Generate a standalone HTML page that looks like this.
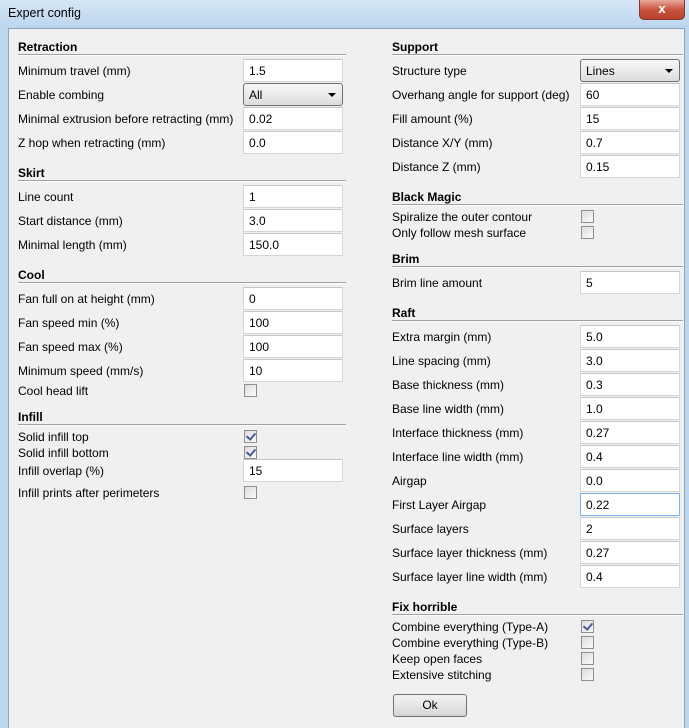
<!DOCTYPE html>
<html><head><meta charset="utf-8"><style>
*{margin:0;padding:0;box-sizing:border-box}
body{width:689px;height:728px;overflow:hidden;background:#bcd6ee;font-family:"Liberation Sans",Tahoma,sans-serif;font-size:12px;color:#000;position:relative}
.tb{position:absolute;left:0;top:0;width:689px;height:28px;background:linear-gradient(#d6e6f6,#bcd5ee)}
.tt{position:absolute;left:8px;top:6px;font-size:12.5px}
.cl{position:absolute;left:639px;top:0;width:46px;height:20px;border:1px solid #7a3a33;border-top:none;border-radius:0 0 5px 5px;background:linear-gradient(#e8a99c,#c8553f 50%,#b8402a);color:#fff;font-weight:bold;text-align:center;font-size:13px;line-height:18px}
.pn{position:absolute;left:8px;top:28px;width:677px;height:700px;background:#f0f0f0;border:1px solid #8ea4bd;border-bottom:none}
.a{position:absolute;white-space:nowrap;margin-top:1px}
.h{font-weight:bold}
.ln{position:absolute;background:#a0a0a0;border-bottom:1px solid #fff;height:2px}
.in{position:absolute;width:100px;height:23px;background:#fff;border:1px solid #d5d5d5;border-top-color:#c5c5c5;padding:4px 0 0 5px}
.cb{position:absolute;width:13px;height:13px;border:1px solid #8f8f8f;background:linear-gradient(135deg,#dcdcdc,#fbfbfb)}
.cb.c::after{content:"";position:absolute;left:3px;top:0px;width:4px;height:7px;border:solid #4a5a9a;border-width:0 2px 2px 0;transform:rotate(40deg)}
.dd{position:absolute;width:100px;height:23px;border:1px solid #707070;border-radius:3px;background:linear-gradient(#f6f6f6,#ebebeb 50%,#dcdcdc);padding:4px 0 0 5px}
.dd::after{content:"";position:absolute;right:6px;top:9px;border:4px solid transparent;border-top:4px solid #000;border-bottom:none}
.ok{position:absolute;left:393px;top:694px;width:74px;height:23px;border:1px solid #707070;border-radius:3px;background:linear-gradient(#f2f2f2,#e6e6e6 50%,#d4d4d4);text-align:center;line-height:21px}
</style></head><body>
<div class="tb"><div class="tt">Expert config</div><div class="cl">x</div></div>
<div class="pn"></div>

<div class="a h" style="left:18px;top:39px">Retraction</div><div class="ln" style="left:18px;top:54px;width:328px"></div>
<div class="a" style="left:18px;top:63px">Minimum travel (mm)</div><div class="in" style="left:243px;top:59px">1.5</div>
<div class="a" style="left:18px;top:87px">Enable combing</div><div class="dd" style="left:243px;top:83px">All</div>
<div class="a" style="left:18px;top:111px">Minimal extrusion before retracting (mm)</div><div class="in" style="left:243px;top:107px">0.02</div>
<div class="a" style="left:18px;top:135px">Z hop when retracting (mm)</div><div class="in" style="left:243px;top:131px">0.0</div>

<div class="a h" style="left:18px;top:165px">Skirt</div><div class="ln" style="left:18px;top:180px;width:328px"></div>
<div class="a" style="left:18px;top:189px">Line count</div><div class="in" style="left:243px;top:185px">1</div>
<div class="a" style="left:18px;top:213px">Start distance (mm)</div><div class="in" style="left:243px;top:209px">3.0</div>
<div class="a" style="left:18px;top:237px">Minimal length (mm)</div><div class="in" style="left:243px;top:233px">150.0</div>

<div class="a h" style="left:18px;top:267px">Cool</div><div class="ln" style="left:18px;top:282px;width:328px"></div>
<div class="a" style="left:18px;top:291px">Fan full on at height (mm)</div><div class="in" style="left:243px;top:287px">0</div>
<div class="a" style="left:18px;top:315px">Fan speed min (%)</div><div class="in" style="left:243px;top:311px">100</div>
<div class="a" style="left:18px;top:339px">Fan speed max (%)</div><div class="in" style="left:243px;top:335px">100</div>
<div class="a" style="left:18px;top:363px">Minimum speed (mm/s)</div><div class="in" style="left:243px;top:359px">10</div>
<div class="a" style="left:18px;top:383px">Cool head lift</div><div class="cb" style="left:244px;top:384px"></div>

<div class="a h" style="left:18px;top:409px">Infill</div><div class="ln" style="left:18px;top:424px;width:328px"></div>
<div class="a" style="left:18px;top:429px">Solid infill top</div><div class="cb c" style="left:244px;top:430px"></div>
<div class="a" style="left:18px;top:445px">Solid infill bottom</div><div class="cb c" style="left:244px;top:446px"></div>
<div class="a" style="left:18px;top:463px">Infill overlap (%)</div><div class="in" style="left:243px;top:459px">15</div>
<div class="a" style="left:18px;top:485px">Infill prints after perimeters</div><div class="cb" style="left:244px;top:486px"></div>

<div class="a h" style="left:392px;top:39px">Support</div><div class="ln" style="left:392px;top:54px;width:291px"></div>
<div class="a" style="left:392px;top:63px">Structure type</div><div class="dd" style="left:580px;top:59px">Lines</div>
<div class="a" style="left:392px;top:87px">Overhang angle for support (deg)</div><div class="in" style="left:580px;top:83px">60</div>
<div class="a" style="left:392px;top:111px">Fill amount (%)</div><div class="in" style="left:580px;top:107px">15</div>
<div class="a" style="left:392px;top:135px">Distance X/Y (mm)</div><div class="in" style="left:580px;top:131px">0.7</div>
<div class="a" style="left:392px;top:159px">Distance Z (mm)</div><div class="in" style="left:580px;top:155px">0.15</div>

<div class="a h" style="left:392px;top:189px">Black Magic</div><div class="ln" style="left:392px;top:204px;width:291px"></div>
<div class="a" style="left:392px;top:209px">Spiralize the outer contour</div><div class="cb" style="left:581px;top:210px"></div>
<div class="a" style="left:392px;top:225px">Only follow mesh surface</div><div class="cb" style="left:581px;top:226px"></div>

<div class="a h" style="left:392px;top:251px">Brim</div><div class="ln" style="left:392px;top:266px;width:291px"></div>
<div class="a" style="left:392px;top:275px">Brim line amount</div><div class="in" style="left:580px;top:271px">5</div>

<div class="a h" style="left:392px;top:305px">Raft</div><div class="ln" style="left:392px;top:320px;width:291px"></div>
<div class="a" style="left:392px;top:329px">Extra margin (mm)</div><div class="in" style="left:580px;top:325px">5.0</div>
<div class="a" style="left:392px;top:353px">Line spacing (mm)</div><div class="in" style="left:580px;top:349px">3.0</div>
<div class="a" style="left:392px;top:377px">Base thickness (mm)</div><div class="in" style="left:580px;top:373px">0.3</div>
<div class="a" style="left:392px;top:401px">Base line width (mm)</div><div class="in" style="left:580px;top:397px">1.0</div>
<div class="a" style="left:392px;top:425px">Interface thickness (mm)</div><div class="in" style="left:580px;top:421px">0.27</div>
<div class="a" style="left:392px;top:449px">Interface line width (mm)</div><div class="in" style="left:580px;top:445px">0.4</div>
<div class="a" style="left:392px;top:473px">Airgap</div><div class="in" style="left:580px;top:469px">0.0</div>
<div class="a" style="left:392px;top:497px">First Layer Airgap</div><div class="in" style="left:580px;top:493px;border-color:#7eb4ea">0.22</div>
<div class="a" style="left:392px;top:521px">Surface layers</div><div class="in" style="left:580px;top:517px">2</div>
<div class="a" style="left:392px;top:545px">Surface layer thickness (mm)</div><div class="in" style="left:580px;top:541px">0.27</div>
<div class="a" style="left:392px;top:569px">Surface layer line width (mm)</div><div class="in" style="left:580px;top:565px">0.4</div>

<div class="a h" style="left:392px;top:599px">Fix horrible</div><div class="ln" style="left:392px;top:614px;width:291px"></div>
<div class="a" style="left:392px;top:619px">Combine everything (Type-A)</div><div class="cb c" style="left:581px;top:620px"></div>
<div class="a" style="left:392px;top:635px">Combine everything (Type-B)</div><div class="cb" style="left:581px;top:636px"></div>
<div class="a" style="left:392px;top:651px">Keep open faces</div><div class="cb" style="left:581px;top:652px"></div>
<div class="a" style="left:392px;top:667px">Extensive stitching</div><div class="cb" style="left:581px;top:668px"></div>
<div class="ok">Ok</div>
</body></html>
